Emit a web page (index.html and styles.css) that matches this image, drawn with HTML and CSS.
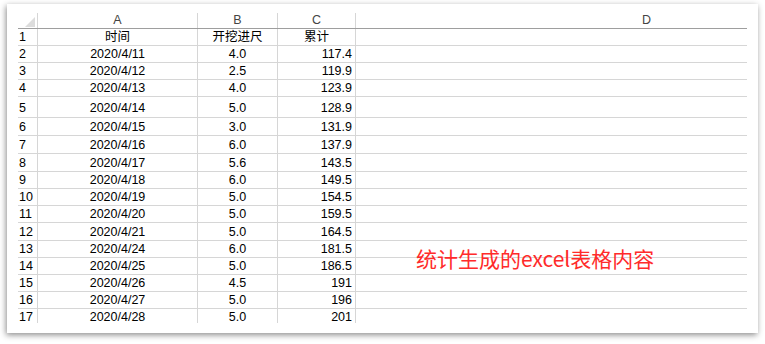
FILE: index.html
```html
<!DOCTYPE html>
<html lang="zh-CN">
<head>
<meta charset="utf-8">
<link rel="stylesheet" href="styles.css">
</head>
<body>
<div class="card">
  <div class="sheet">
    <div class="row head">
      <div class="c rn corner"><span class="tri"></span></div>
      <div class="c ctr">A</div>
      <div class="c ctr">B</div>
      <div class="c ctr">C</div>
      <div class="c ctr dh">D</div>
    </div>
    <div class="row">
      <div class="c rn">1</div><div class="c ctr">时间</div><div class="c ctr">开挖进尺</div><div class="c ctr">累计</div><div class="c"></div>
    </div>
    <div class="row"><div class="c rn">2</div><div class="c ctr">2020/4/11</div><div class="c ctr">4.0</div><div class="c num">117.4</div><div class="c"></div></div>
    <div class="row"><div class="c rn">3</div><div class="c ctr">2020/4/12</div><div class="c ctr">2.5</div><div class="c num">119.9</div><div class="c"></div></div>
    <div class="row"><div class="c rn">4</div><div class="c ctr">2020/4/13</div><div class="c ctr">4.0</div><div class="c num">123.9</div><div class="c"></div></div>
    <div class="row r21"><div class="c rn">5</div><div class="c ctr">2020/4/14</div><div class="c ctr">5.0</div><div class="c num">128.9</div><div class="c"></div></div>
    <div class="row r18"><div class="c rn">6</div><div class="c ctr">2020/4/15</div><div class="c ctr">3.0</div><div class="c num">131.9</div><div class="c"></div></div>
    <div class="row r18"><div class="c rn">7</div><div class="c ctr">2020/4/16</div><div class="c ctr">6.0</div><div class="c num">137.9</div><div class="c"></div></div>
    <div class="row r18"><div class="c rn">8</div><div class="c ctr">2020/4/17</div><div class="c ctr">5.6</div><div class="c num">143.5</div><div class="c"></div></div>
    <div class="row"><div class="c rn">9</div><div class="c ctr">2020/4/18</div><div class="c ctr">6.0</div><div class="c num">149.5</div><div class="c"></div></div>
    <div class="row"><div class="c rn">10</div><div class="c ctr">2020/4/19</div><div class="c ctr">5.0</div><div class="c num">154.5</div><div class="c"></div></div>
    <div class="row"><div class="c rn">11</div><div class="c ctr">2020/4/20</div><div class="c ctr">5.0</div><div class="c num">159.5</div><div class="c"></div></div>
    <div class="row r18"><div class="c rn">12</div><div class="c ctr">2020/4/21</div><div class="c ctr">5.0</div><div class="c num">164.5</div><div class="c"></div></div>
    <div class="row"><div class="c rn">13</div><div class="c ctr">2020/4/24</div><div class="c ctr">6.0</div><div class="c num">181.5</div><div class="c note-cell"><span class="note">统计生成的excel表格内容</span></div></div>
    <div class="row"><div class="c rn">14</div><div class="c ctr">2020/4/25</div><div class="c ctr">5.0</div><div class="c num">186.5</div><div class="c"></div></div>
    <div class="row"><div class="c rn">15</div><div class="c ctr">2020/4/26</div><div class="c ctr">4.5</div><div class="c num">191</div><div class="c"></div></div>
    <div class="row"><div class="c rn">16</div><div class="c ctr">2020/4/27</div><div class="c ctr">5.0</div><div class="c num">196</div><div class="c"></div></div>
    <div class="row"><div class="c rn">17</div><div class="c ctr">2020/4/28</div><div class="c ctr">5.0</div><div class="c num">201</div><div class="c"></div></div>
  </div>
</div>
</body>
</html>
```

FILE: styles.css
```css
html, body {
  margin: 0;
  padding: 0;
  background: #ffffff;
}
body {
  width: 765px;
  height: 344px;
  overflow: hidden;
}
.card {
  margin: 4px 0 0 7px;
  width: 751px;
  height: 329px;
  background: #ffffff;
  box-shadow: -1px 2px 6px rgba(0, 0, 0, 0.45);
  padding: 9px 0 0 11px;
  box-sizing: border-box;
}
.sheet {
  width: 729px;
  height: 310px;
  overflow: hidden;
  font-family: "Liberation Sans", Arial, "Noto Sans CJK SC", sans-serif;
  font-size: 12.5px;
  color: #000;
}
.row {
  display: grid;
  grid-template-columns: 20px 160px 80px 78px 600px;
  height: 17px;
  box-sizing: border-box;
  border-bottom: 1px solid #d6d6d6;
}
.row.head {
  height: 16px;
  border-bottom: 1px solid #9e9e9e;
}
.row.r21 { height: 21px; }
.row.r18 { height: 18px; }
.c {
  box-sizing: border-box;
  border-right: 1px solid #d6d6d6;
  line-height: 16px;
  white-space: nowrap;
  overflow: visible;
  position: relative;
}
.head .c {
  color: #444;
  line-height: 15px;
}
.rn {
  padding-left: 1px;
}
.ctr { text-align: center; }
.num { text-align: right; padding-right: 3px; }
.row.r21 .c { line-height: 22px; }
.row.r18 .c { line-height: 18px; }
.dh {
  text-align: left;
  padding-left: 286px;
}
.corner { position: relative; }
.tri {
  position: absolute;
  right: 2px;
  bottom: 1px;
  width: 0;
  height: 0;
  border-style: solid;
  border-width: 0 0 10px 10px;
  border-color: transparent transparent #dcdcdc transparent;
}
.note-cell { overflow: visible; }
.note {
  position: absolute;
  left: 60px;
  top: 5px;
  font-family: "Noto Sans CJK SC", "Microsoft YaHei", sans-serif;
  font-size: 21px;
  line-height: 24px;
  color: #ff2b2b;
}
```
